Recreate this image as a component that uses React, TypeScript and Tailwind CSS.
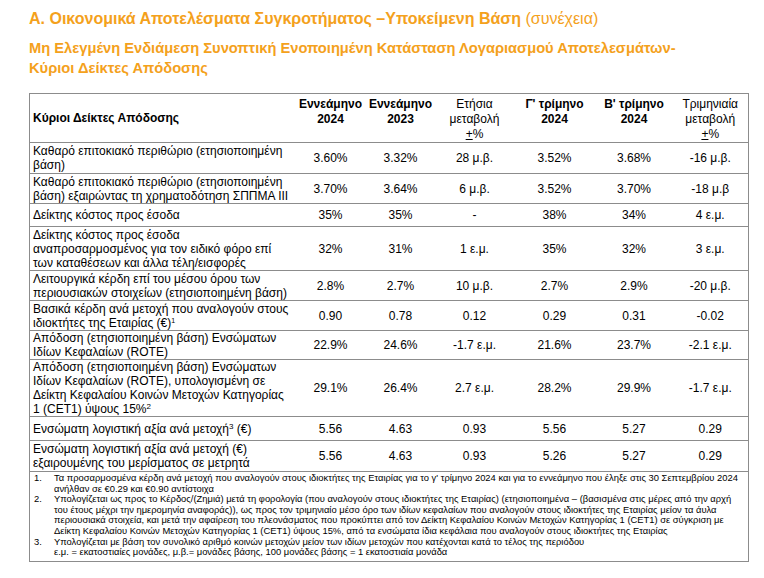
import React from 'react';

type Row = { label: React.ReactNode; v: string[]; h: number };

const rows: Row[] = [
  {
    label: <>Καθαρό επιτοκιακό περιθώριο (ετησιοποιημένη<br />βάση)</>,
    v: ['3.60%', '3.32%', '28 μ.β.', '3.52%', '3.68%', '-16 μ.β.'],
    h: 31,
  },
  {
    label: <>Καθαρό επιτοκιακό περιθώριο (ετησιοποιημένη<br />βάση) εξαιρώντας τη χρηματοδότηση ΣΠΠΜΑ ΙΙΙ</>,
    v: ['3.70%', '3.64%', '6 μ.β.', '3.52%', '3.70%', '-18 μ.β'],
    h: 30,
  },
  { label: <>Δείκτης κόστος προς έσοδα</>, v: ['35%', '35%', '-', '38%', '34%', '4 ε.μ.'], h: 23 },
  {
    label: (
      <>
        Δείκτης κόστος προς έσοδα
        <br />
        αναπροσαρμοσμένος για τον ειδικό φόρο επί
        <br />
        των καταθέσεων και άλλα τέλη/εισφορές
      </>
    ),
    v: ['32%', '31%', '1 ε.μ.', '35%', '32%', '3 ε.μ.'],
    h: 44,
  },
  {
    label: <>Λειτουργικά κέρδη επί του μέσου όρου των<br />περιουσιακών στοιχείων (ετησιοποιημένη βάση)</>,
    v: ['2.8%', '2.7%', '10 μ.β.', '2.7%', '2.9%', '-20 μ.β.'],
    h: 30,
  },
  {
    label: (
      <>
        Βασικά κέρδη ανά μετοχή που αναλογούν στους
        <br />
        ιδιοκτήτες της Εταιρίας (€)<sup className="text-[7px]">1</sup>
      </>
    ),
    v: ['0.90', '0.78', '0.12', '0.29', '0.31', '-0.02'],
    h: 30,
  },
  {
    label: <>Απόδοση (ετησιοποιημένη βάση) Ενσώματων<br />Ιδίων Κεφαλαίων (ROTE)</>,
    v: ['22.9%', '24.6%', '-1.7 ε.μ.', '21.6%', '23.7%', '-2.1 ε.μ.'],
    h: 29,
  },
  {
    label: (
      <>
        Απόδοση (ετησιοποιημένη βάση) Ενσώματων
        <br />
        Ιδίων Κεφαλαίων (ROTE), υπολογισμένη σε
        <br />
        Δείκτη Κεφαλαίου Κοινών Μετοχών Κατηγορίας
        <br />1 (CET1) ύψους 15%<sup className="text-[8px]">2</sup>
      </>
    ),
    v: ['29.1%', '26.4%', '2.7 ε.μ.', '28.2%', '29.9%', '-1.7 ε.μ.'],
    h: 57,
  },
  {
    label: (
      <>
        Ενσώματη λογιστική αξία ανά μετοχή<sup className="text-[8px]">3</sup> (€)
      </>
    ),
    v: ['5.56', '4.63', '0.93', '5.56', '5.27', '0.29'],
    h: 24,
  },
  {
    label: <>Ενσώματη λογιστική αξία ανά μετοχή (€)<br />εξαιρουμένης του μερίσματος σε μετρητά</>,
    v: ['5.56', '4.63', '0.93', '5.26', '5.27', '0.29'],
    h: 31,
  },
];

const notes: { n: string; lines: string[] }[] = [
  {
    n: '1.',
    lines: [
      'Τα προσαρμοσμένα κέρδη ανά μετοχή που αναλογούν στους ιδιοκτήτες της Εταιρίας για το γ\' τρίμηνο 2024 και για το εννεάμηνο που έληξε στις 30 Σεπτεμβρίου 2024',
      'ανήλθαν σε €0.29 και €0.90 αντίστοιχα',
    ],
  },
  {
    n: '2.',
    lines: [
      'Υπολογίζεται ως προς το Κέρδος/(Ζημιά) μετά τη φορολογία (που αναλογούν στους ιδιοκτήτες της Εταιρίας) (ετησιοποιημένα – (βασισμένα στις μέρες από την αρχή',
      'του έτους μέχρι την ημερομηνία αναφοράς)), ως προς τον τριμηνιαίο μέσο όρο των ιδίων κεφαλαίων που αναλογούν στους ιδιοκτήτες της Εταιρίας μείον τα άυλα',
      'περιουσιακά στοιχεία, και μετά την αφαίρεση του πλεονάσματος που προκύπτει από τον Δείκτη Κεφαλαίου Κοινών Μετοχών Κατηγορίας 1 (CET1) σε σύγκριση με',
      'Δείκτη Κεφαλαίου Κοινών Μετοχών Κατηγορίας 1 (CET1) ύψους 15%, από τα ενσώματα ίδια κεφάλαια που αναλογούν στους ιδιοκτήτες της Εταιρίας',
    ],
  },
  {
    n: '3.',
    lines: ['Υπολογίζεται με βάση τον συνολικό αριθμό κοινών μετοχών μείον των ιδίων μετοχών που κατέχονται κατά το τέλος της περιόδου'],
  },
  { n: '', lines: ['ε.μ. = εκατοστιαίες μονάδες, μ.β.= μονάδες βάσης, 100 μονάδες βάσης = 1 εκατοστιαία μονάδα'] },
];

const Change = ({ top }: { top: string }) => (
  <>
    {top}
    <br />
    μεταβολή
    <br />
    <span className="underline">+</span>%
  </>
);

export default function App() {
  return (
    <div className="w-[764px] h-[578px] bg-white text-black font-['Liberation_Sans',Arial,sans-serif] pl-[29px] pt-[9px]">
      <h1 className="text-[16px] leading-[19px] font-bold text-[#f4a11c]">
        Α. Οικονομικά Αποτελέσματα Συγκροτήματος –Υποκείμενη Βάση <span className="font-normal">(συνέχεια)</span>
      </h1>
      <h2 className="mt-[10px] text-[14.7px] leading-[20px] font-bold text-[#f4a11c]">
        Μη Ελεγμένη Ενδιάμεση Συνοπτική Ενοποιημένη Κατάσταση Λογαριασμού Αποτελεσμάτων-
        <br />
        Κύριοι Δείκτες Απόδοσης
      </h2>

      <table className="mt-[15px] w-[719px] table-fixed border-collapse text-[12px] leading-[14px]">
        <colgroup>
          <col className="w-[266px]" />
          <col className="w-[70px]" />
          <col className="w-[70px]" />
          <col className="w-[78px]" />
          <col className="w-[82px]" />
          <col className="w-[77px]" />
          <col className="w-[76px]" />
        </colgroup>
        <thead>
          <tr className="h-[49px] border border-[#8c8c8c]">
            <th className="pl-[3px] text-left align-middle font-bold">Κύριοι Δείκτες Απόδοσης</th>
            <th className="pt-[3px] align-top font-bold leading-[15px]">Εννεάμηνο<br />2024</th>
            <th className="pt-[3px] align-top font-bold leading-[15px]">Εννεάμηνο<br />2023</th>
            <th className="pt-[3px] align-top font-normal leading-[15px]"><Change top="Ετήσια" /></th>
            <th className="pt-[3px] align-top font-bold leading-[15px]">Γ' τρίμηνο<br />2024</th>
            <th className="pt-[3px] align-top font-bold leading-[15px]">Β' τρίμηνο<br />2024</th>
            <th className="pt-[3px] align-top font-normal leading-[15px]"><Change top="Τριμηνιαία" /></th>
          </tr>
        </thead>
        <tbody>
          {rows.map((r, i) => (
            <tr key={i} className="border border-[#8c8c8c]" style={{ height: r.h }}>
              <td className="pl-[3px] align-middle whitespace-nowrap">{r.label}</td>
              {r.v.map((v, j) => (
                <td key={j} className="text-center align-middle">{v}</td>
              ))}
            </tr>
          ))}
          <tr className="border border-[#8c8c8c]">
            <td colSpan={7} className="pt-[1px] pb-[3px] text-[9.4px] leading-[10.6px]">
              {notes.map((nt, i) => (
                <div key={i} className="flex">
                  <div className="w-[24px] shrink-0 pl-[4px]">{nt.n}</div>
                  <div className="whitespace-nowrap">
                    {nt.lines.map((l, k) => (
                      <div key={k}>{l}</div>
                    ))}
                  </div>
                </div>
              ))}
            </td>
          </tr>
        </tbody>
      </table>
    </div>
  );
}
